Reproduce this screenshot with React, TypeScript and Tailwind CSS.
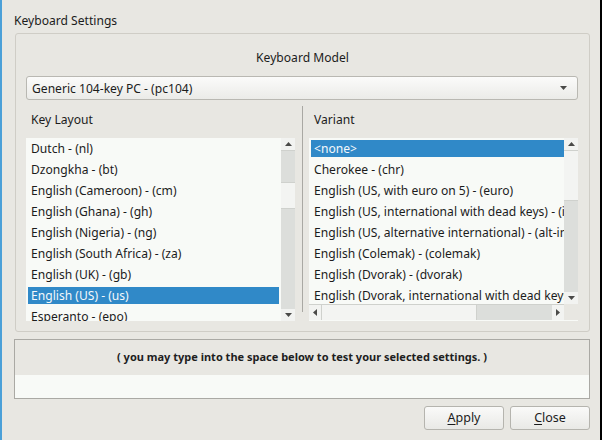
import React from "react";

const leftItems = [
  "Dutch - (nl)",
  "Dzongkha - (bt)",
  "English (Cameroon) - (cm)",
  "English (Ghana) - (gh)",
  "English (Nigeria) - (ng)",
  "English (South Africa) - (za)",
  "English (UK) - (gb)",
  "English (US) - (us)",
  "Esperanto - (epo)",
];

const rightItems = [
  "<none>",
  "Cherokee - (chr)",
  "English (US, with euro on 5) - (euro)",
  "English (US, international with dead keys) - (intl)",
  "English (US, alternative international) - (alt-intl)",
  "English (Colemak) - (colemak)",
  "English (Dvorak) - (dvorak)",
  "English (Dvorak, international with dead keys) - (dvorak-intl)",
];

function Tri({ dir }: { dir: "up" | "down" | "left" | "right" }) {
  const pts =
    dir === "up"
      ? "0,4 7,4 3.5,0"
      : dir === "down"
      ? "0,0 7,0 3.5,4"
      : dir === "left"
      ? "4,0 4,7 0,3.5"
      : "0,0 0,7 4,3.5";
  const w = dir === "up" || dir === "down" ? 7 : 4;
  const h = dir === "up" || dir === "down" ? 4 : 7;
  return (
    <svg width={w} height={h} viewBox={`0 0 ${w} ${h}`}>
      <polygon points={pts} fill="#4a4a48" />
    </svg>
  );
}

function Row({ text, selected }: { text: string; selected?: boolean }) {
  return (
    <div className="h-[21px] py-[2px] pl-[2px] shrink-0">
      <div
        className={
          "h-[17px] leading-[18px] pl-[3px] whitespace-nowrap " +
          (selected ? "bg-[#3089c8] text-[#f4f8fb]" : "text-[#1c1c1c]")
        }
      >
        {text}
      </div>
    </div>
  );
}

export default function App() {
  return (
    <div
      className="w-[602px] h-[440px] bg-[#e8e7e2] border-l-2 border-[#4ba0d8] border-r-2 border-r-black overflow-hidden text-[12.1px] text-[#1c1c1c]"
      style={{ fontFamily: '"Noto Sans", "DejaVu Sans", sans-serif' }}
    >
      <div className="pl-[12px] pt-[12px] leading-[17px] h-[29px]">Keyboard Settings</div>

      {/* main group */}
      <div className="ml-[13px] mt-[4px] w-[575px] h-[299px] border border-[#cfcdc6] rounded-[3px] flex flex-col">
        <div className="pt-[15px] leading-[17px] text-center">Keyboard Model</div>
        <div className="ml-[10px] mt-[10px] w-[552px] h-[24px] border border-[#b9b8b2] rounded-[3px] bg-gradient-to-b from-[#fbfbfa] to-[#ebebe8] flex items-center pl-[5px] pr-[10px]">
          <span className="flex-1 leading-[18px] pt-[1px]">Generic 104-key PC - (pc104)</span>
          <Tri dir="down" />
        </div>

        <div className="flex ml-[10px] flex-1">
          {/* left panel */}
          <div className="w-[270px] flex flex-col">
            <div className="pl-[5px] pt-[11px] leading-[17px] h-[28px]">Key Layout</div>
            <div className="mt-[10px] h-[183px] w-[269px] bg-[#f8faf7] flex overflow-hidden">
              <div className="flex-1 flex flex-col overflow-hidden pr-[2px]">
                {leftItems.map((t) => (
                  <Row key={t} text={t} selected={t === "English (US) - (us)"} />
                ))}
              </div>
              <div className="w-[14px] flex flex-col bg-[#dcdedb]">
                <div className="h-[13px] bg-[#f2f3f1] border-b border-[#cfd1cd] flex items-center justify-center">
                  <Tri dir="up" />
                </div>
                <div className="h-[31px]" />
                <div className="h-[27px] bg-[#f3f4f2] border-y border-[#cfd1cd]" />
                <div className="flex-1" />
                <div className="h-[12px] bg-[#f2f3f1] flex items-center justify-center">
                  <Tri dir="down" />
                </div>
              </div>
            </div>
          </div>

          {/* splitter */}
          <div className="w-[13px] flex justify-center pt-[6px] pb-[10px]">
            <div className="w-px bg-[#a9a8a3]" />
          </div>

          {/* right panel */}
          <div className="w-[269px] flex flex-col">
            <div className="pl-[5px] pt-[11px] leading-[17px] h-[28px]">Variant</div>
            <div className="mt-[10px] h-[183px] w-[269px] bg-[#f8faf7] flex flex-col overflow-hidden">
              <div className="flex h-[166px]">
                <div className="flex-1 flex flex-col overflow-hidden">
                  {rightItems.map((t) => (
                    <Row key={t} text={t} selected={t === "<none>"} />
                  ))}
                </div>
                <div className="w-[14px] flex flex-col bg-[#dcdedb]">
                  <div className="h-[13px] bg-[#f2f3f1] border-b border-[#cfd1cd] flex items-center justify-center">
                    <Tri dir="up" />
                  </div>
                  <div className="h-[50px] bg-[#f3f4f2] border-b border-[#cfd1cd]" />
                  <div className="flex-1" />
                  <div className="h-[12px] bg-[#f2f3f1] flex items-center justify-center">
                    <Tri dir="down" />
                  </div>
                </div>
              </div>
              <div className="flex h-[16px]">
                <div className="flex-1 flex bg-[#dcdedb] border-t border-[#cfd1cd]">
                  <div className="w-[13px] bg-[#f2f3f1] border-r border-[#cfd1cd] flex items-center justify-center">
                    <Tri dir="left" />
                  </div>
                  <div className="w-[155px] bg-[#f3f4f2] border-r border-[#cfd1cd]" />
                  <div className="flex-1" />
                  <div className="w-[12px] bg-[#f2f3f1] flex items-center justify-center">
                    <Tri dir="right" />
                  </div>
                </div>
                <div className="w-[14px] bg-[#e8e7e2]" />
              </div>
            </div>
          </div>
        </div>
        <div className="h-[9px]" />
      </div>

      {/* test area */}
      <div className="ml-[12px] mt-[7px] w-[576px] h-[60px] border border-[#aaa9a4] flex flex-col">
        <div className="h-[35px] flex items-center justify-center font-bold text-[11px] text-[#1e1e1e]">
          ( you may type into the space below to test your selected settings. )
        </div>
        <div className="flex-1 bg-[#f8faf7]" />
      </div>

      <div className="flex justify-end gap-[6px] mt-[7px] pr-[10px]">
        <button className="w-[80px] h-[24px] border border-[#b5b4ae] rounded-[3px] bg-gradient-to-b from-[#fafaf9] to-[#e9e9e6] leading-[18px] text-[12.5px]">
          <span className="underline underline-offset-2">A</span>pply
        </button>
        <button className="w-[80px] h-[24px] border border-[#b5b4ae] rounded-[3px] bg-gradient-to-b from-[#fafaf9] to-[#e9e9e6] leading-[18px] text-[12.5px]">
          <span className="underline underline-offset-2">C</span>lose
        </button>
      </div>
    </div>
  );
}
